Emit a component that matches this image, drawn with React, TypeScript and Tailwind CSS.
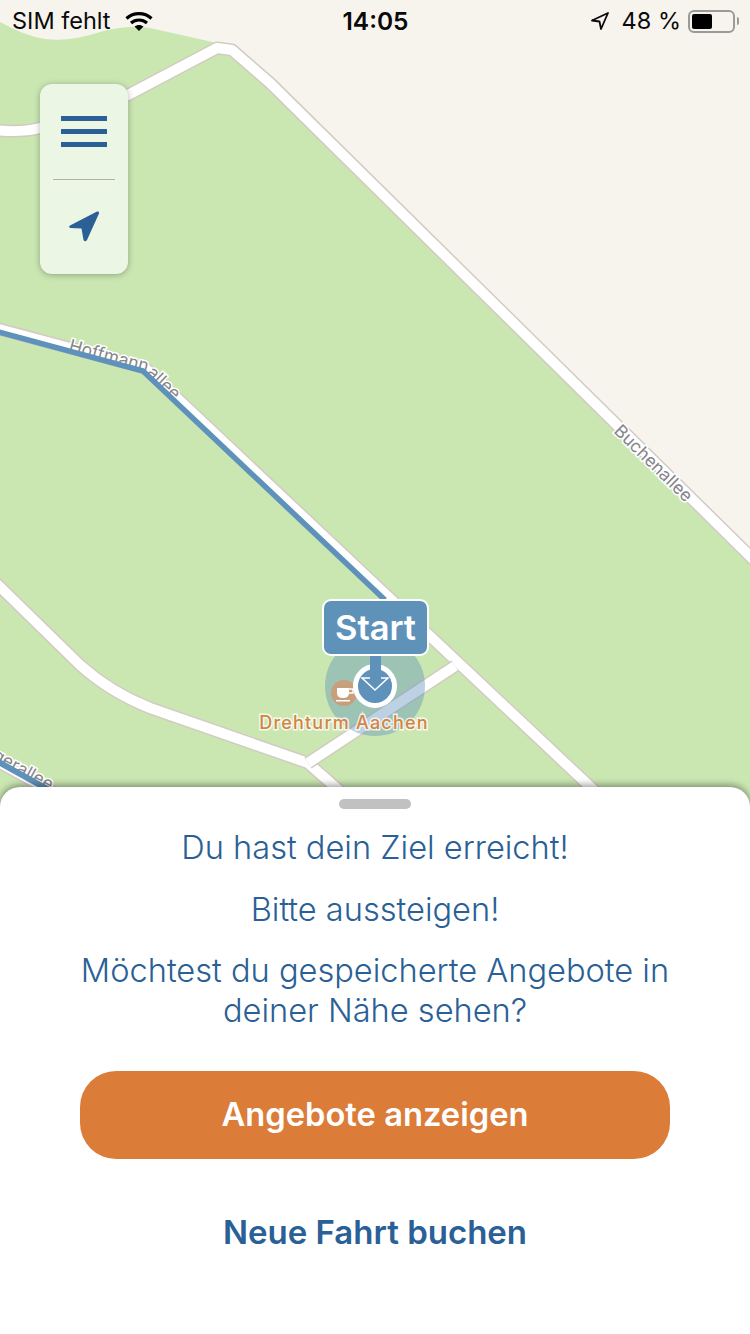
import React from "react";

const font = { fontFamily: "Inter, 'Liberation Sans', sans-serif" };

const MapRoad = ({ d }: { d: string }) => (
  <>
    <path d={d} fill="none" stroke="#d3cbc2" strokeWidth="13" strokeLinejoin="round" />
    <path d={d} fill="none" stroke="#ffffff" strokeWidth="10" strokeLinejoin="round" />
  </>
);

const MapView = () => (
  <svg className="block" width="750" height="810" viewBox="0 0 750 810">
    <defs>
      <path id="hoff" d="M68 351 L143 371 L205 430" />
      <path id="buche" d="M613 432 L702 519" />
      <path id="berg" d="M-33 745 L77 806" />
    </defs>
    <rect width="750" height="810" fill="#cae7b2" />
    <path
      d="M0 0 H750 V556 L270 82 L232 49 L217 43 L150 28 Q125 25 100 32 Q70 42 45 39 Q25 36 0 22 Z"
      fill="#f7f4ee"
    />
    <MapRoad d="M-5 130 Q20 133 40 128 L128 95 L217 48 L232 50 L270 83 L760 566" />
    <MapRoad d="M-5 328 L145 368 L600 796" />
    <MapRoad d="M-5 582 L80 665 Q110 692 150 708 L308 763 L350 800" />
    <MapRoad d="M308 763 L455 666" />
    <MapRoad d="M-5 760 L60 796" />
    <g style={font} fontSize="17.5" fill="#85858a" stroke="#ffffff" strokeWidth="3" paintOrder="stroke">
      <text>
        <textPath href="#hoff">Hoffmannallee</textPath>
      </text>
      <text>
        <textPath href="#buche">Buchenallee</textPath>
      </text>
      <text>
        <textPath href="#berg">Bergerallee</textPath>
      </text>
    </g>
    <path d="M-5 331 L143 371 L385 600" fill="none" stroke="#5f92bb" strokeWidth="5.5" strokeLinejoin="round" />
    <path d="M-5 760 L60 796" fill="none" stroke="#5f92bb" strokeWidth="6" />
    <circle cx="375" cy="686" r="50" fill="#5f92bb" fillOpacity="0.42" />
    <circle cx="344" cy="693" r="13" fill="#c89f7c" />
    <path d="M337 688 H349 V693 Q349 698 343 698 Q337 698 337 693 Z M336 700 H350 V701.5 H336 Z" fill="#ffffff" />
    <path d="M349 689 H353 V693 H348" fill="none" stroke="#ffffff" strokeWidth="1.5" />
    <text
      x="344"
      y="729"
      textAnchor="middle"
      style={font}
      fontSize="18"
      fontWeight="500"
      letterSpacing="1.2"
      fill="#d3843f"
      stroke="#ffffff"
      strokeOpacity="0.8"
      strokeWidth="3"
      paintOrder="stroke"
    >
      Drehturm Aachen
    </text>
    <circle cx="375" cy="686" r="19.5" fill="#5f92bb" stroke="#ffffff" strokeWidth="5" />
    <path d="M370 650 H381 V678 H388 L375 690 L362 678 H370 Z" fill="#5f92bb" />
    <path d="M370 678 H362 L375 690 L388 678 H381" fill="none" stroke="#ffffff" strokeWidth="1.5" />
  </svg>
);

const ControlPanel = () => (
  <div className="absolute left-[40px] top-[84px] flex h-[190px] w-[88px] flex-col items-center rounded-[12px] bg-[#ecf6e5] shadow-[0_1px_6px_rgba(0,0,0,0.3)]">
    <div className="mt-[32px] flex w-[46px] flex-col gap-[8px]">
      <div className="h-[5px] bg-[#2a6096]" />
      <div className="h-[5px] bg-[#2a6096]" />
      <div className="h-[5px] bg-[#2a6096]" />
    </div>
    <div className="mt-[32px] h-px w-[62px] bg-[#aeb3aa]" />
    <svg className="mt-[30px]" width="32" height="32" viewBox="0 0 32 32">
      <path
        d="M2 15.5 L29 1.5 Q31.5 1 31 3.5 L19 30 Q17 32.5 15.5 30 L13.5 18.5 L2.5 18 Q0 17 2 15.5 Z"
        fill="#2a6096"
      />
    </svg>
  </div>
);

const StatusBar = () => (
  <div className="absolute left-0 top-0 flex h-[42px] w-full items-center justify-between pl-[12px] pr-[11px] text-[23.5px] text-[#0a0a0a]" style={font}>
    <div className="flex w-[260px] items-center gap-[14px]">
      <span>SIM fehlt</span>
      <svg width="28" height="21" viewBox="0 0 28 21">
        <path d="M1.5 7.5 C8.5 1 19.5 1 26.5 7.5" fill="none" stroke="#000" strokeWidth="3.2" />
        <path d="M6 12 C10.5 8 17.5 8 22 12" fill="none" stroke="#000" strokeWidth="3.2" />
        <path d="M14 20 L9.5 15.5 C12 13.4 16 13.4 18.5 15.5 Z" fill="#000" />
      </svg>
    </div>
    <span className="text-[24.5px] font-semibold">14:05</span>
    <div className="flex w-[260px] items-center justify-end">
      <svg width="20" height="20" viewBox="0 0 20 20" className="mr-[12px]">
        <path d="M2 9.5 L18 2 L11 18 L9.5 10.5 Z" fill="none" stroke="#0a0a0a" strokeWidth="1.8" strokeLinejoin="round" />
      </svg>
      <span>48 %</span>
      <div className="ml-[7px] flex items-center">
        <div className="flex h-[23px] w-[47px] items-center rounded-[6px] border-2 border-[#9a9a96] px-[2px]">
          <div className="h-[15px] w-[20px] rounded-[2px] bg-black" />
        </div>
        <div className="ml-[2px] h-[8px] w-[2px] rounded-r-full bg-[#9a9a96]" />
      </div>
    </div>
  </div>
);

export default function App() {
  return (
    <div className="flex h-[1334px] w-[750px] flex-col overflow-hidden bg-white" style={font}>
      <div className="relative h-[807px] -mb-[20px] shrink-0">
        <MapView />
        <StatusBar />
        <ControlPanel />
        <div className="absolute left-[322px] top-[599px] flex h-[57px] w-[107px] items-center justify-center rounded-[9px] border-2 border-white bg-[#5f92b8] text-[34.5px] font-semibold text-white">
          Start
        </div>
      </div>
      <div className="relative flex flex-1 flex-col items-center rounded-t-[20px] bg-white shadow-[0_-2px_7px_rgba(0,0,0,0.4)]">
        <div className="mt-[12px] h-[10px] w-[72px] rounded-full bg-[#c1c1c1]" />
        <p className="mt-[18px] text-[32.6px] font-light leading-[40px] text-[#2a6096]">Du hast dein Ziel erreicht!</p>
        <p className="mt-[22px] text-[32.6px] font-light leading-[40px] text-[#2a6096]">Bitte aussteigen!</p>
        <p className="mt-[21px] w-[620px] text-center text-[32.6px] font-light leading-[40px] text-[#2a6096]">
          Möchtest du gespeicherte Angebote in deiner Nähe sehen?
        </p>
        <button className="mt-[41px] h-[88px] w-[590px] rounded-[36px] bg-[#db7c39] text-[32.7px] font-semibold text-white">
          Angebote anzeigen
        </button>
        <button className="mt-[48px] text-[33px] font-semibold leading-[50px] text-[#2a6096]">Neue Fahrt buchen</button>
      </div>
    </div>
  );
}
